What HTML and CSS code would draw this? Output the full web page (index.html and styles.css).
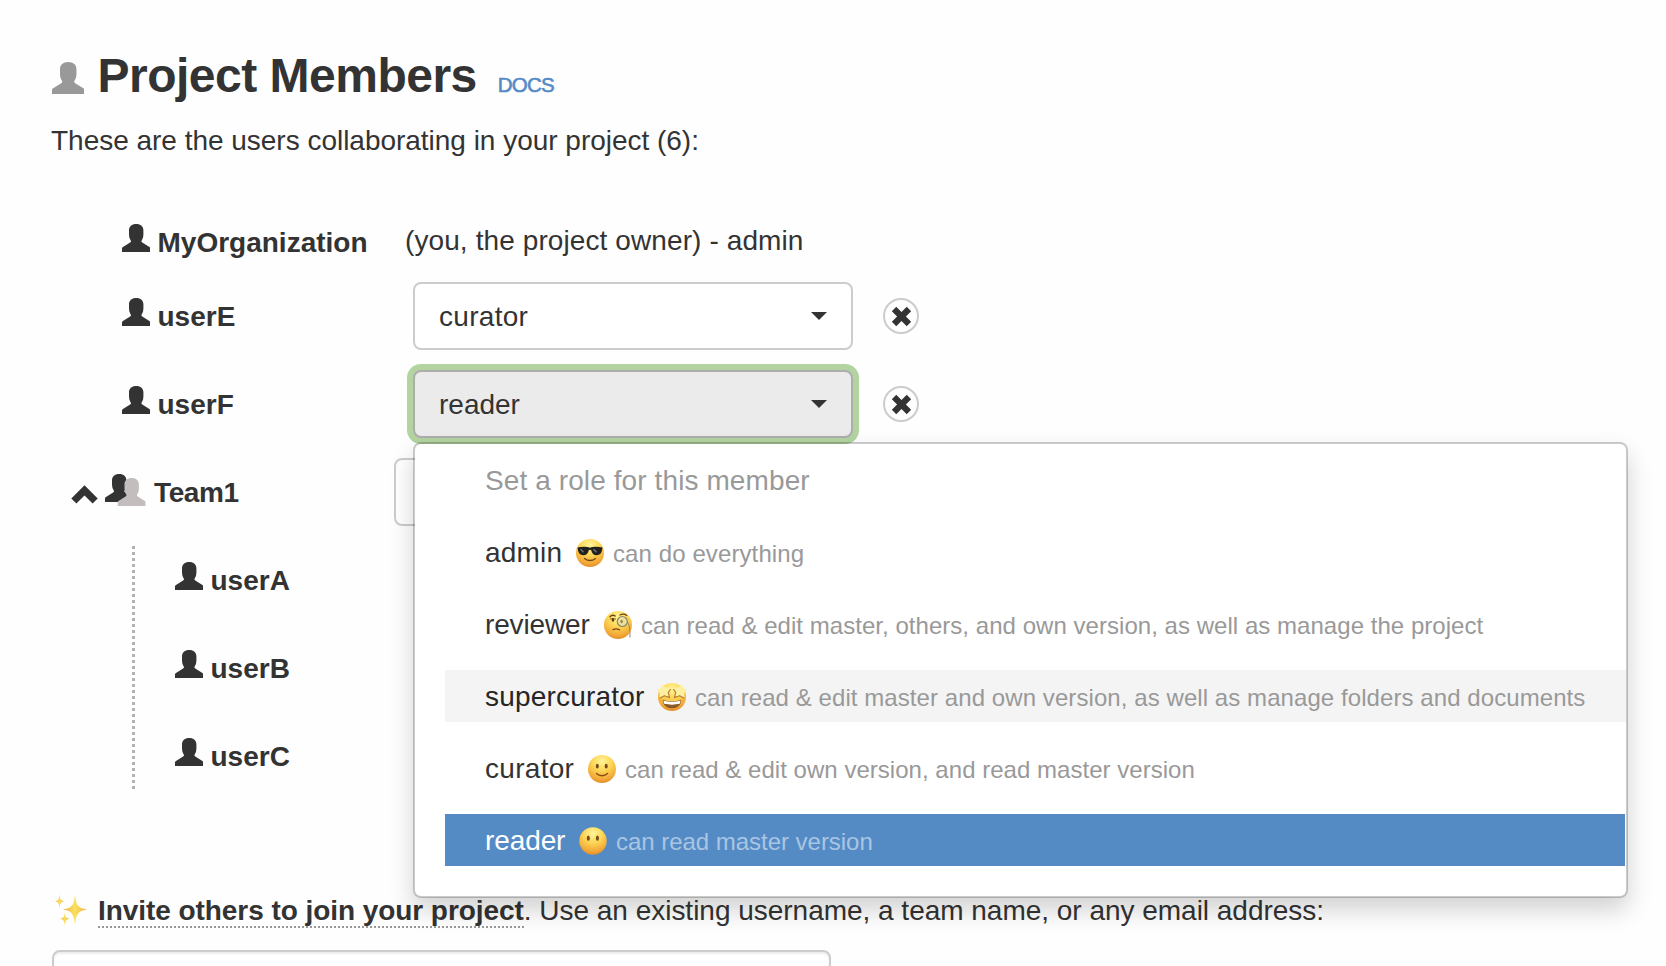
FILE: index.html
```html
<!DOCTYPE html>
<html lang="en">
<head>
<meta charset="utf-8">
<title>Project Members</title>
<link rel="stylesheet" href="styles.css">
</head>
<body>
<svg class="defs" aria-hidden="true">
  <defs>
    <radialGradient id="face" cx="50%" cy="22%" r="80%">
      <stop offset="0" stop-color="#fff59a"/>
      <stop offset=".45" stop-color="#fcd453"/>
      <stop offset=".8" stop-color="#f3aa38"/>
      <stop offset="1" stop-color="#e08a2c"/>
    </radialGradient>
    <linearGradient id="spark" x1="0" x2="1">
      <stop offset="0" stop-color="#f0b050"/>
      <stop offset=".5" stop-color="#fbe05a"/>
      <stop offset="1" stop-color="#f0b050"/>
    </linearGradient>
    <symbol id="user" viewBox="0 0 28 28">
      <path d="M14.200 0c4.500 0 7.200 2.500 7.200 6.500v3.500c0 2.500-.5 4.600-1.500 6-.7 1-.6 2 .4 2.600L27.800 23.200c.4.300.6.700.6 1.200V28H0v-3.600c0-.5.200-.9.600-1.200L8.100 18.600c1-.6 1.100-1.600.4-2.600C7.500 14.600 7 12.500 7 10V6.500C7 2.500 9.700 0 14.200 0z"/>
    </symbol>
    <symbol id="cross" viewBox="0 0 20 20">
      <path d="M5 .8 10 5.800 15 .8 19.200 5 14.200 10 19.200 15 15 19.200 10 14.200 5 19.200 .8 15 5.800 10 .8 5z" stroke-linejoin="round"/>
    </symbol>
  </defs>
</svg>
<main class="page">
  <header class="title">
    <svg class="title-icon"><use href="#user"/></svg>
    <h1>Project Members</h1>
    <a class="docs">DOCS</a>
  </header>
  <p class="intro">These are the users collaborating in your project (6):</p>

  <section class="members">
    <div class="row owner">
      <div class="who"><svg class="user"><use href="#user"/></svg><b>MyOrganization</b></div>
      <span class="owner-note">(you, the project owner) - admin</span>
    </div>
    <div class="row">
      <div class="who"><svg class="user"><use href="#user"/></svg><b>userE</b></div>
      <div class="role"><button class="select"><span class="wide">curator</span><i class="caret"></i></button></div>
      <button class="remove"><svg><use href="#cross"/></svg></button>
    </div>
    <div class="row">
      <div class="who"><svg class="user"><use href="#user"/></svg><b>userF</b></div>
      <div class="role">
        <button class="select open"><span>reader</span><i class="caret"></i></button>
        <div class="menu">
          <div class="menu-title">Set a role for this member</div>
          <div class="item">
            <span class="name w-admin">admin</span>
            <svg class="emoji" viewBox="0 0 30 30"><circle cx="15" cy="15" r="14" fill="url(#face)"/><path d="M2.500 9.500C7 8.200 12 8.600 15 9.700c3-1.100 8-1.500 12.500-.2l-.4 2.200c-.5 3.400-2.200 5.500-5.400 5.500-3 0-4.800-2-5.500-5-.4-.7-2-.7-2.400 0-.7 3-2.500 5-5.500 5-3.200 0-4.900-2.100-5.400-5.500z" fill="#20201f"/><path d="M5.500 11.200l3 3M18.500 11.200l3 3" stroke="#777" stroke-width="1.300"/><path d="M9.500 20.500c3.300 2.500 7.700 2.500 11 0" fill="none" stroke="#7b4513" stroke-width="1.500" stroke-linecap="round"/></svg>
            <span class="desc d1">can do everything</span>
          </div>
          <div class="item">
            <span class="name w-reviewer">reviewer</span>
            <svg class="emoji" viewBox="0 0 30 30"><circle cx="15" cy="15" r="14" fill="url(#face)"/><path d="M7 6.800c1.500-1.700 3.500-1.900 5.300-.8M17 5c2.500-1.400 5-1 6.800.4" fill="none" stroke="#70420f" stroke-width="1.300" stroke-linecap="round"/><ellipse cx="10" cy="10" rx="1.300" ry="1.700" fill="#5f3a10"/><path d="M7 9.200c2-.9 4-.9 6 0" fill="none" stroke="#5f3a10" stroke-width=".8"/><circle cx="19.300" cy="11.500" r="5" fill="#ece0a0" stroke="#8b8663" stroke-width="1.200"/><ellipse cx="18.600" cy="11.500" rx="1.300" ry="1.800" fill="#a08545"/><path d="M24.500 12c2 3 2.800 8 2.400 15.500" fill="none" stroke="#8b8663" stroke-width="1"/><path d="M10 19.600c2-1 4.500-1 6.500.2" fill="none" stroke="#7b4513" stroke-width="1.300" stroke-linecap="round"/></svg>
            <span class="desc d2">can read &amp; edit master, others, and own version, as well as manage the project</span>
          </div>
          <div class="item hover">
            <span class="name w-super">supercurator</span>
            <svg class="emoji" viewBox="0 0 30 30"><circle cx="15" cy="15" r="14" fill="url(#face)"/><path d="M5.800 18c6 1.600 12.400 1.600 18.400 0 0 5-3.700 8.300-9.200 8.300S5.800 23 5.800 18z" fill="#8a5a28"/><path d="M6.600 18.800c5.600 1.300 11.200 1.300 16.800 0 .1 1.200-.2 2.200-.6 3-5.200 1.100-10.400 1.100-15.600 0-.4-.8-.7-1.800-.6-3z" fill="#fff"/><path d="M5 1.500 8.300 5.600 14.600 6.200 11.300 10.300 12.600 15.600 7.400 13.800 2.500 16.200 3 11.300-.4 7.800 4.400 6.400zM25 1.500 21.700 5.600 15.400 6.200 18.700 10.300 17.400 15.600 22.600 13.800 27.500 16.200 27 11.300 30.400 7.800 25.600 6.400z" fill="#fdf0a0"/><path d="M13.800 7 11.300 10.300 12.600 15.600 7.400 13.800 2.500 16.200M16.200 7l2.500 3.300L17.400 15.600l5.200-1.800 4.900 2.400" fill="none" stroke="#b98232" stroke-width="1.200" stroke-linejoin="round"/></svg>
            <span class="desc d3">can read &amp; edit master and own version, as well as manage folders and documents</span>
          </div>
          <div class="item">
            <span class="name w-curator">curator</span>
            <svg class="emoji" viewBox="0 0 30 30"><circle cx="15" cy="15" r="14" fill="url(#face)"/><ellipse cx="10.300" cy="12.200" rx="1.500" ry="2.400" fill="#78481a"/><ellipse cx="19.200" cy="12.200" rx="1.500" ry="2.400" fill="#78481a"/><path d="M9.500 19.500c3 3 8 3 11 0" fill="none" stroke="#8a4d17" stroke-width="1.400" stroke-linecap="round"/></svg>
            <span class="desc d4">can read &amp; edit own version, and read master version</span>
          </div>
          <div class="item active">
            <span class="name w-reader">reader</span>
            <svg class="emoji" viewBox="0 0 30 30"><circle cx="15" cy="15" r="13.700" fill="url(#face)"/><ellipse cx="10.300" cy="12.200" rx="1.500" ry="2.600" fill="#78481a"/><ellipse cx="19.400" cy="12.200" rx="1.500" ry="2.600" fill="#78481a"/></svg>
            <span class="desc d5">can read master version</span>
          </div>
        </div>
      </div>
      <button class="remove"><svg><use href="#cross"/></svg></button>
    </div>
    <div class="row team">
      <div class="who">
        <svg class="chevron" viewBox="0 0 27 19"><path d="M13.500.3 26.700 13.500 21.600 18.600 13.500 10.500 5.400 18.600.3 13.500z"/></svg>
        <svg class="team-icon" viewBox="0 0 41 32"><use href="#user" width="28" height="28"/><use href="#user" x="12.500" y="4" width="28" height="28" fill="#c3bebd"/></svg>
        <b class="tight">Team1</b>
      </div>
      <div class="role"><button class="select"></button></div>
    </div>
    <div class="team-members">
      <div class="row"><div class="who"><svg class="user"><use href="#user"/></svg><b>userA</b></div></div>
      <div class="row"><div class="who"><svg class="user"><use href="#user"/></svg><b>userB</b></div></div>
      <div class="row"><div class="who"><svg class="user"><use href="#user"/></svg><b>userC</b></div></div>
    </div>
  </section>

  <div class="invite">
    <svg class="sparkles" viewBox="0 0 32 32" fill="url(#spark)"><path d="M20 .5C21 11 22.500 14 32 15.500 22.500 17 21 20.500 20 31 19 20.500 17.500 17 8 15.500 17.500 14 19 11 20 .5z"/><path d="M4.500 0C5 5 5.500 6.500 9.500 7.300 5.500 8.100 5 9.600 4.500 14.500 4 9.600 3.500 8.100-.2 7.300 3.500 6.500 4 5 4.500 0z"/><path d="M9.800 18c.5 5 1 6 5 6.800-4 .8-4.500 2.300-5 7-.5-4.700-1-6.200-5-7 4-.8 4.500-1.800 5-6.800z"/></svg>
    <p><b>Invite others to join your project</b><span>. Use an existing username, a team name, or any email address:</span></p>
  </div>
  <input class="invite-input" type="text" aria-label="Invite">
</main>
</body>
</html>
```
FILE: styles.css
```css
* { box-sizing: border-box; }
html, body { margin: 0; height: 100%; overflow: hidden; background: #fefefe; }
body {
  font-family: "Liberation Sans", Arial, sans-serif;
  font-size: 28px;
  line-height: 40px;
  color: #333;
}
svg { flex: none; fill: #333; overflow: visible; }
.defs { position: absolute; width: 0; height: 0; }
button { font: inherit; color: inherit; padding: 0; }

.page { height: 966px; padding: 48px 0 0 51px; overflow: hidden; }

.title { display: flex; align-items: baseline; height: 56px; line-height: 56px; }
.title-icon { width: 32px; height: 32px; fill: #999; align-self: flex-start; margin: 14px 0 0 .5px; }
h1 { margin: 0 0 0 14px; font-size: 48px; line-height: 56px; letter-spacing: -.5px; white-space: nowrap; }
.docs { margin-left: 21px; font-size: 20.5px; color: #548bc5; letter-spacing: -.8px; -webkit-text-stroke: .6px #548bc5; }
.intro { margin: 17px 0 51px; letter-spacing: -.02px; white-space: nowrap; }

.row { display: flex; align-items: center; height: 88px; }
.who { display: flex; align-items: center; width: 362px; padding-left: 70.5px; white-space: nowrap; }
.who b { padding-top: 2px; }
.tight { letter-spacing: -.4px; }
.user { width: 28px; height: 28px; margin: 0 8px 8px 0; }
.owner { height: 60px; }
.owner .who { width: 354px; }
.owner-note { padding-bottom: 2px; letter-spacing: .1px; white-space: nowrap; }

.role { position: relative; }
.select {
  display: flex;
  align-items: center;
  justify-content: space-between;
  width: 440px;
  height: 68px;
  padding: 0 24px;
  border: 2px solid #ccc;
  border-radius: 8px;
  background: #fff;
}
.select span { padding-top: 2px; }
.wide { letter-spacing: .3px; }
.select.open { background: #ebebeb; border-color: #adadad; box-shadow: 0 0 0 6px #b3d4a1; }
.caret { border: 8px solid transparent; border-top-color: #333; border-bottom: 0; }
.remove {
  display: flex;
  align-items: center;
  justify-content: center;
  width: 36px;
  height: 36px;
  margin-left: 30px;
  border: 2px solid #ccc;
  border-radius: 50%;
  background: #fff;
}
.remove svg { width: 21px; height: 21px; }

.menu {
  position: absolute;
  z-index: 5;
  top: 72px;
  left: 0;
  width: 1215px;
  height: 456px;
  padding: 17px 1px 0 30px;
  border: 2px solid rgba(0, 0, 0, .2);
  border-radius: 8px;
  background: #fff;
  background-clip: padding-box;
  box-shadow: 0 12px 24px rgba(0, 0, 0, .175);
  white-space: nowrap;
}
.menu-title { padding-left: 40px; color: #999; letter-spacing: .1px; }
.item { display: flex; align-items: center; height: 52px; margin-top: 20px; padding-left: 40px; }
.menu-title + .item { margin-top: 25px; }
.item.hover { background: #f4f4f4; margin-right: -1px; }
.item.active { background: #548bc5; color: #fff; }
.name { padding-top: 2px; }
.emoji { width: 30px; height: 30px; margin-top: 1px; }
.desc { margin-left: 8px; font-size: 24px; color: #999; padding-top: 4px; }
.active .desc { color: #aac5e2; }
.w-admin { width: 90px; letter-spacing: .2px; }
.w-reviewer { width: 118px; letter-spacing: -.15px; }
.w-super { width: 172px; letter-spacing: .2px; color: #262626; }
.w-curator { width: 102px; letter-spacing: .3px; }
.w-reader { width: 93px; letter-spacing: -.1px; }
.d1 { letter-spacing: .1px; }
.d2 { letter-spacing: .04px; }
.d3 { letter-spacing: .075px; }
.d4 { letter-spacing: .03px; }
.d5 { letter-spacing: -.03px; }

.team .who { width: 343px; padding-left: 20px; }
.chevron { width: 27px; height: 19px; margin: 4px 7px 0 0; }
.team-icon { width: 41px; height: 32px; margin: 0 8px 4px 0; }
.team-members { position: relative; padding-left: 53px; }
.team-members::before {
  content: "";
  position: absolute;
  top: 10px;
  bottom: 10px;
  left: 81px;
  width: 3px;
  background: repeating-linear-gradient(#b3b3b3 0 3px, transparent 3px 6px);
}

.invite { display: flex; margin-top: 90px; height: 40px; }
.sparkles { width: 32px; height: 32px; margin: 4px 11px 0 4px; fill: url(#spark); }
.invite p { margin: 1px 0 0; white-space: nowrap; letter-spacing: -.02px; }
.invite b { display: inline-block; height: 37px; border-bottom: 2px dotted #999; letter-spacing: -.06px; }
.invite-input {
  display: block;
  width: 779px;
  height: 68px;
  margin: 20px 0 0 1px;
  border: 2px solid #ccc;
  border-radius: 8px;
  background: #fff;
  box-shadow: inset 0 2px 2px rgba(0, 0, 0, .075);
}
```
